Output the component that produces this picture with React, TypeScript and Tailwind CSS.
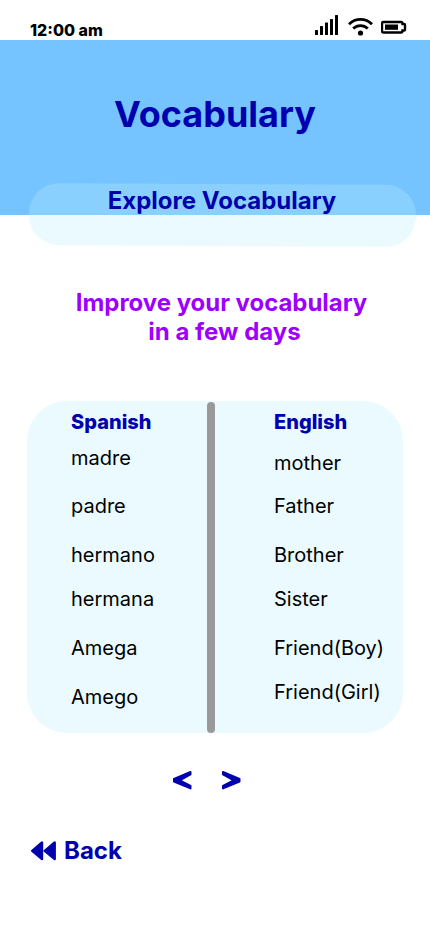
const spanish: [string, string][] = [
  ['madre', 'mt-3'],
  ['padre', 'mt-6'],
  ['hermano', 'mt-[25px]'],
  ['hermana', 'mt-5'],
  ['Amega', 'mt-[25px]'],
  ['Amego', 'mt-[25px]'],
];

const english: [string, string][] = [
  ['mother', 'mt-[17px]'],
  ['Father', 'mt-[19px]'],
  ['Brother', 'mt-[25px]'],
  ['Sister', 'mt-5'],
  ['Friend(Boy)', 'mt-[25px]'],
  ['Friend(Girl)', 'mt-5'],
];

function StatusBar() {
  return (
    <header className="flex h-10 items-start justify-between pl-[30px] pr-[23px] text-black">
      <span className="mt-5 text-base leading-5 font-extrabold">12:00 am</span>
      <div className="mt-[15px] flex">
        <svg width="24" height="20" viewBox="0 0 24 20" fill="currentColor">
          <rect x="0" y="15" width="3" height="5" rx="0.5" />
          <rect x="5" y="11" width="3" height="9" rx="0.5" />
          <rect x="10" y="7.5" width="3" height="12.5" rx="0.5" />
          <rect x="15" y="4" width="3" height="16" rx="0.5" />
          <rect x="20" y="0" width="3" height="20" rx="0.5" />
        </svg>
        <svg className="ml-2 mt-[2px]" width="27" height="19" viewBox="0 0 27 19" fill="none" stroke="currentColor" strokeWidth="2.8">
          <path d="M2 7.2C8.5.8 18.5.8 25 7.2" />
          <path d="M6.2 11.6c4.2-4 10.4-4 14.6 0" />
          <circle cx="13.5" cy="16" r="2.6" fill="currentColor" stroke="none" />
        </svg>
        <svg className="ml-[7px] mt-[5px]" width="26" height="14" viewBox="0 0 26 14" fill="none">
          <path d="M2.5 2H20q1.500 0 1.500 2h1.500q1 0 1 1v4.500q0 1-1 1h-1.500q0 2-1.500 2H2.500Q1 12.500 1 11V3.500Q1 2 2.500 2Z" stroke="currentColor" strokeWidth="2.4" />
          <rect x="4" y="4.500" width="13" height="5.300" fill="currentColor" />
        </svg>
      </div>
    </header>
  );
}

function WordColumn({ title, words }: { title: string; words: [string, string][] }) {
  return (
    <div className="pt-[9px] text-xl leading-6">
      <h3 className="font-extrabold text-[#0000ae]">{title}</h3>
      {words.map(([word, gap]) => (
        <p key={word} className={gap}>{word}</p>
      ))}
    </div>
  );
}

export default function App() {
  return (
    <main className="h-[932px] w-[430px] overflow-hidden bg-white font-['Inter',sans-serif] text-black">
      <StatusBar />
      <section className="h-[175px] bg-[#75c3ff] pt-[52px] text-center text-[#0000ae]">
        <h1 className="text-4xl leading-[44px] font-bold">Vocabulary</h1>
        <div className="ml-[29px] mt-[48px] h-[62px] w-[387px] rotate-[0.3deg] rounded-[30px] bg-[#b9f0ff]/30" />
        <h2 className="relative -mt-[60px] mr-[-14px] text-2xl leading-[29px] font-bold">Explore Vocabulary</h2>
      </section>
      <div className="mt-[73px] pl-[13px] text-center text-2xl leading-[29px] font-bold text-[#9e00ff]">
        <p className="tracking-[-0.04px]">Improve your vocabulary</p>
        <p className="pl-[6px]">in a few days</p>
      </div>
      <section className="ml-[27px] mt-[55px] flex h-[332px] w-[376px] rounded-[40px] bg-[#eafaff]">
        <div className="w-[180px] pl-11"><WordColumn title="Spanish" words={spanish} /></div>
        <div className="mt-px h-[331px] w-2 rounded-full bg-[#999999]" />
        <div className="pl-[59px]"><WordColumn title="English" words={english} /></div>
      </section>
      <nav className="ml-[172px] mt-[37px] flex gap-[29px] text-[#0000ae]">
        <svg width="20" height="20" viewBox="0 0 20 20" fill="currentColor" stroke="currentColor" strokeWidth="2" strokeLinejoin="round">
          <path d="M18.500 2v2.400L7.800 10.300 18.500 16v2.400L2 11.500V9Z" />
        </svg>
        <svg width="21" height="20" viewBox="0 0 21 20" fill="currentColor" stroke="currentColor" strokeWidth="2" strokeLinejoin="round">
          <path d="M2 2v2.400l10.700 5.900L2 16v2.400l16.500-6.900V9Z" />
        </svg>
      </nav>
      <div className="ml-[30px] mt-[46px] flex items-center text-[#0000ae]">
        <svg width="27" height="20" viewBox="0 0 27 20" fill="currentColor" stroke="currentColor" strokeWidth="2.4" strokeLinejoin="round">
          <path d="M12 1.500v16.500L2.200 9.800Z" />
          <path d="M24.700 1.500v16.500L14.700 9.800Z" />
        </svg>
        <span className="ml-[7px] text-2xl leading-[29px] font-bold">Back</span>
      </div>
    </main>
  );
}
